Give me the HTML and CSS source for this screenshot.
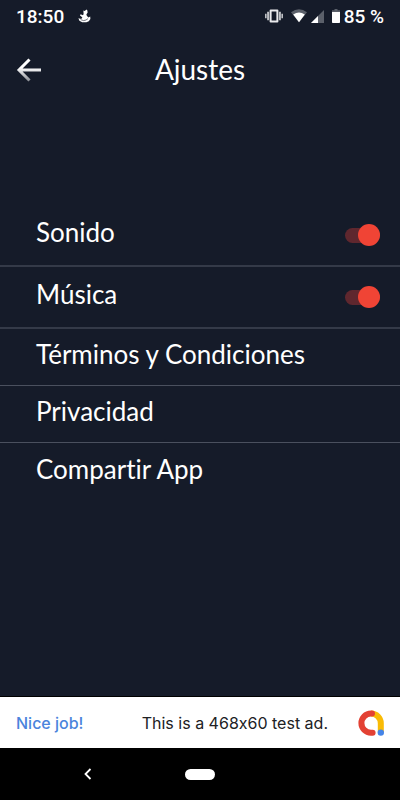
FILE: index.html
```html
<!DOCTYPE html>
<html lang="es">
<head>
  <meta charset="UTF-8">
  <meta name="viewport" content="width=device-width, initial-scale=1.0">
  <title>Ajustes</title>
  <link rel="stylesheet" href="styles.css">
</head>
<body>
  <div class="status-bar">
    <span class="time">18:50</span>
    <svg class="notification" width="14" height="14" viewBox="0 0 14 14" fill="#fff">
      <path d="M5.4 1.6l1.4 0.4 1.6-1.6 1 1.2 0.2 2.2-1.2 1.4 0.4 1.6 1.6 1.8 1.8-1.2 0.2 2.6-1.6 2.2-2.4 1H4.2L1.4 11.8 0.4 9.2l2.8 0.8 1.2-1.4-2.4-2.2 0.6-1.2 2.4 1 0.6-1.2z"/>
      <path d="M2.6 10.6l3 1 2.4-0.6 2-1.4" fill="none" stroke="#151b29" stroke-width="0.6"/>
    </svg>
    <div class="status-icons">
      <svg width="18" height="14" viewBox="0 0 18 14" fill="#e9eaec">
        <path fill-rule="evenodd" d="M5.6 0.5h6.8a1 1 0 0 1 1 1v11a1 1 0 0 1-1 1H5.6a1 1 0 0 1-1-1v-11a1 1 0 0 1 1-1zM6.6 2.5v9h4.8v-9z"/>
        <path d="M2.3 2.8h1.5v8.4H2.3zM0.2 4.8h1.3v4.4H0.2zM14.2 2.8h1.5v8.4h-1.5zM16.5 4.8h1.3v4.4h-1.3z"/>
      </svg>
      <svg class="wifi" width="16" height="14" viewBox="0 0 16 14">
        <path d="M0 3.2Q8-2.6 16 3.2L8 13.2z" fill="#5b606a"/>
        <path d="M2.2 5.6Q8 1.2 13.8 5.6L8 13.2z" fill="#fff"/>
      </svg>
      <svg class="signal" width="13" height="13" viewBox="0 0 13 13">
        <path d="M13 0v13H0z" fill="#5b606a"/>
        <path d="M7 6v7H0z" fill="#fff"/>
      </svg>
      <svg class="battery" width="8" height="14" viewBox="0 0 8 14">
        <path d="M2.5 0h3v1.2H8V4H0V1.2h2.5z" fill="#5b606a"/>
        <path d="M0 3h8v10.2a0.8 0.8 0 0 1-0.8 0.8H0.8a0.8 0.8 0 0 1-0.8-0.8z" fill="#fff"/>
      </svg>
      <span>85 %</span>
    </div>
  </div>

  <header class="header">
    <button class="back" aria-label="Volver">
      <svg width="26" height="24" viewBox="0 0 26 24" fill="none" stroke-width="3">
        <defs>
          <linearGradient id="arrow" x1="0" y1="0" x2="0" y2="24" gradientUnits="userSpaceOnUse">
            <stop offset="0.4" stop-color="#fff"/>
            <stop offset="1" stop-color="#85888f"/>
          </linearGradient>
        </defs>
        <path d="M13.5 1.5L3 12l10.5 10.5M3 12h22" stroke="url(#arrow)"/>
      </svg>
    </button>
    <h1>Ajustes</h1>
  </header>

  <main class="settings">
    <label class="option toggle">
      <span>Sonido</span>
      <input type="checkbox" class="switch" checked>
    </label>
    <label class="option toggle">
      <span>Música</span>
      <input type="checkbox" class="switch" checked>
    </label>
    <a class="option" href="#">Términos y Condiciones</a>
    <a class="option" href="#">Privacidad</a>
    <a class="option" href="#">Compartir App</a>
  </main>

  <div class="ad">
    <strong>Nice job!</strong>
    <span>This is a 468x60 test ad.</span>
    <svg width="26" height="26" viewBox="0 0 26 26" fill="none" stroke-width="6" stroke-linecap="round">
      <path d="M13 3.5a9.8 9.8 0 0 1 9.8 9.8V22" stroke="#f9bb05" stroke-linecap="butt"/>
      <path d="M14 3.5h-1a9.6 9.6 0 0 0 0 19.2h1.6" stroke="#e34133"/>
      <circle cx="22.8" cy="22.6" r="3.2" fill="#4584e8"/>
    </svg>
  </div>

  <nav class="nav-bar">
    <button class="nav-back" aria-label="Atrás">
      <svg width="8" height="12" viewBox="0 0 8 12" fill="none" stroke="#fff" stroke-width="1.8">
        <path d="M6.5 1L1.5 6l5 5"/>
      </svg>
    </button>
    <button class="nav-home" aria-label="Inicio"></button>
  </nav>
</body>
</html>
```

FILE: styles.css
```css
* {
  box-sizing: border-box;
}

body {
  margin: 0;
  min-height: 100vh;
  display: flex;
  flex-direction: column;
  background-color: #151b29;
  color: #fff;
  font-family: Lato, sans-serif;
  font-variant-ligatures: none;
}

button {
  padding: 0;
  border: none;
  background: none;
  cursor: pointer;
}

svg {
  display: block;
}

.status-bar {
  display: flex;
  align-items: center;
  height: 32px;
  padding: 0 16px;
  font-family: Roboto, sans-serif;
  font-size: 19px;
  font-weight: 500;
}

.notification {
  margin-left: 14px;
}

.status-icons {
  display: flex;
  align-items: center;
  gap: 4px;
  margin-left: auto;
}

.wifi {
  margin-left: 4px;
}

.battery {
  margin-left: 4px;
}

.header {
  display: grid;
  grid-template-columns: 28px 1fr 28px;
  align-items: center;
  height: 76px;
  padding: 0 16px;
}

.header h1 {
  margin: 0;
  padding-bottom: 2px;
  font-size: 28px;
  font-weight: 400;
  text-align: center;
}

.settings {
  flex: 1;
  padding-top: 97px;
}

.option {
  display: flex;
  align-items: center;
  height: 57px;
  padding: 0 20px 6px 36px;
  border-bottom: 1px solid #4a505e;
  color: #fff;
  font-size: 26px;
  text-decoration: none;
}

.option:last-child {
  border-bottom: none;
}

.toggle {
  justify-content: space-between;
  height: 62px;
  padding-bottom: 0;
  border-bottom-width: 2px;
  border-color: #343a48;
}

.toggle span {
  padding-bottom: 6px;
}

.switch {
  appearance: none;
  display: flex;
  align-items: center;
  width: 35px;
  height: 15px;
  margin: 0;
  border-radius: 8px;
  background-color: #5f272e;
  cursor: pointer;
}

.switch::before {
  content: "";
  width: 22px;
  height: 22px;
  border-radius: 50%;
  background-color: #9a9da4;
}

.switch:checked::before {
  margin-left: auto;
  background-color: #f04435;
}

.ad {
  display: flex;
  align-items: center;
  justify-content: flex-end;
  gap: 30px;
  height: 52px;
  padding: 0 16px;
  border-top: 1px solid #000;
  background-color: #fff;
  color: #202124;
  font-family: Inter, sans-serif;
  font-size: 16px;
  font-feature-settings: "calt" 0;
}

.ad strong {
  margin-right: auto;
  color: #4a84dc;
  font-weight: 500;
}

.nav-bar {
  display: grid;
  grid-template-columns: 1fr 30px 1fr;
  align-items: center;
  height: 52px;
  background-color: #000;
}

.nav-back {
  justify-self: center;
  margin-right: 10px;
}

.nav-home {
  width: 30px;
  height: 11px;
  border-radius: 6px;
  background-color: #fff;
}
```
